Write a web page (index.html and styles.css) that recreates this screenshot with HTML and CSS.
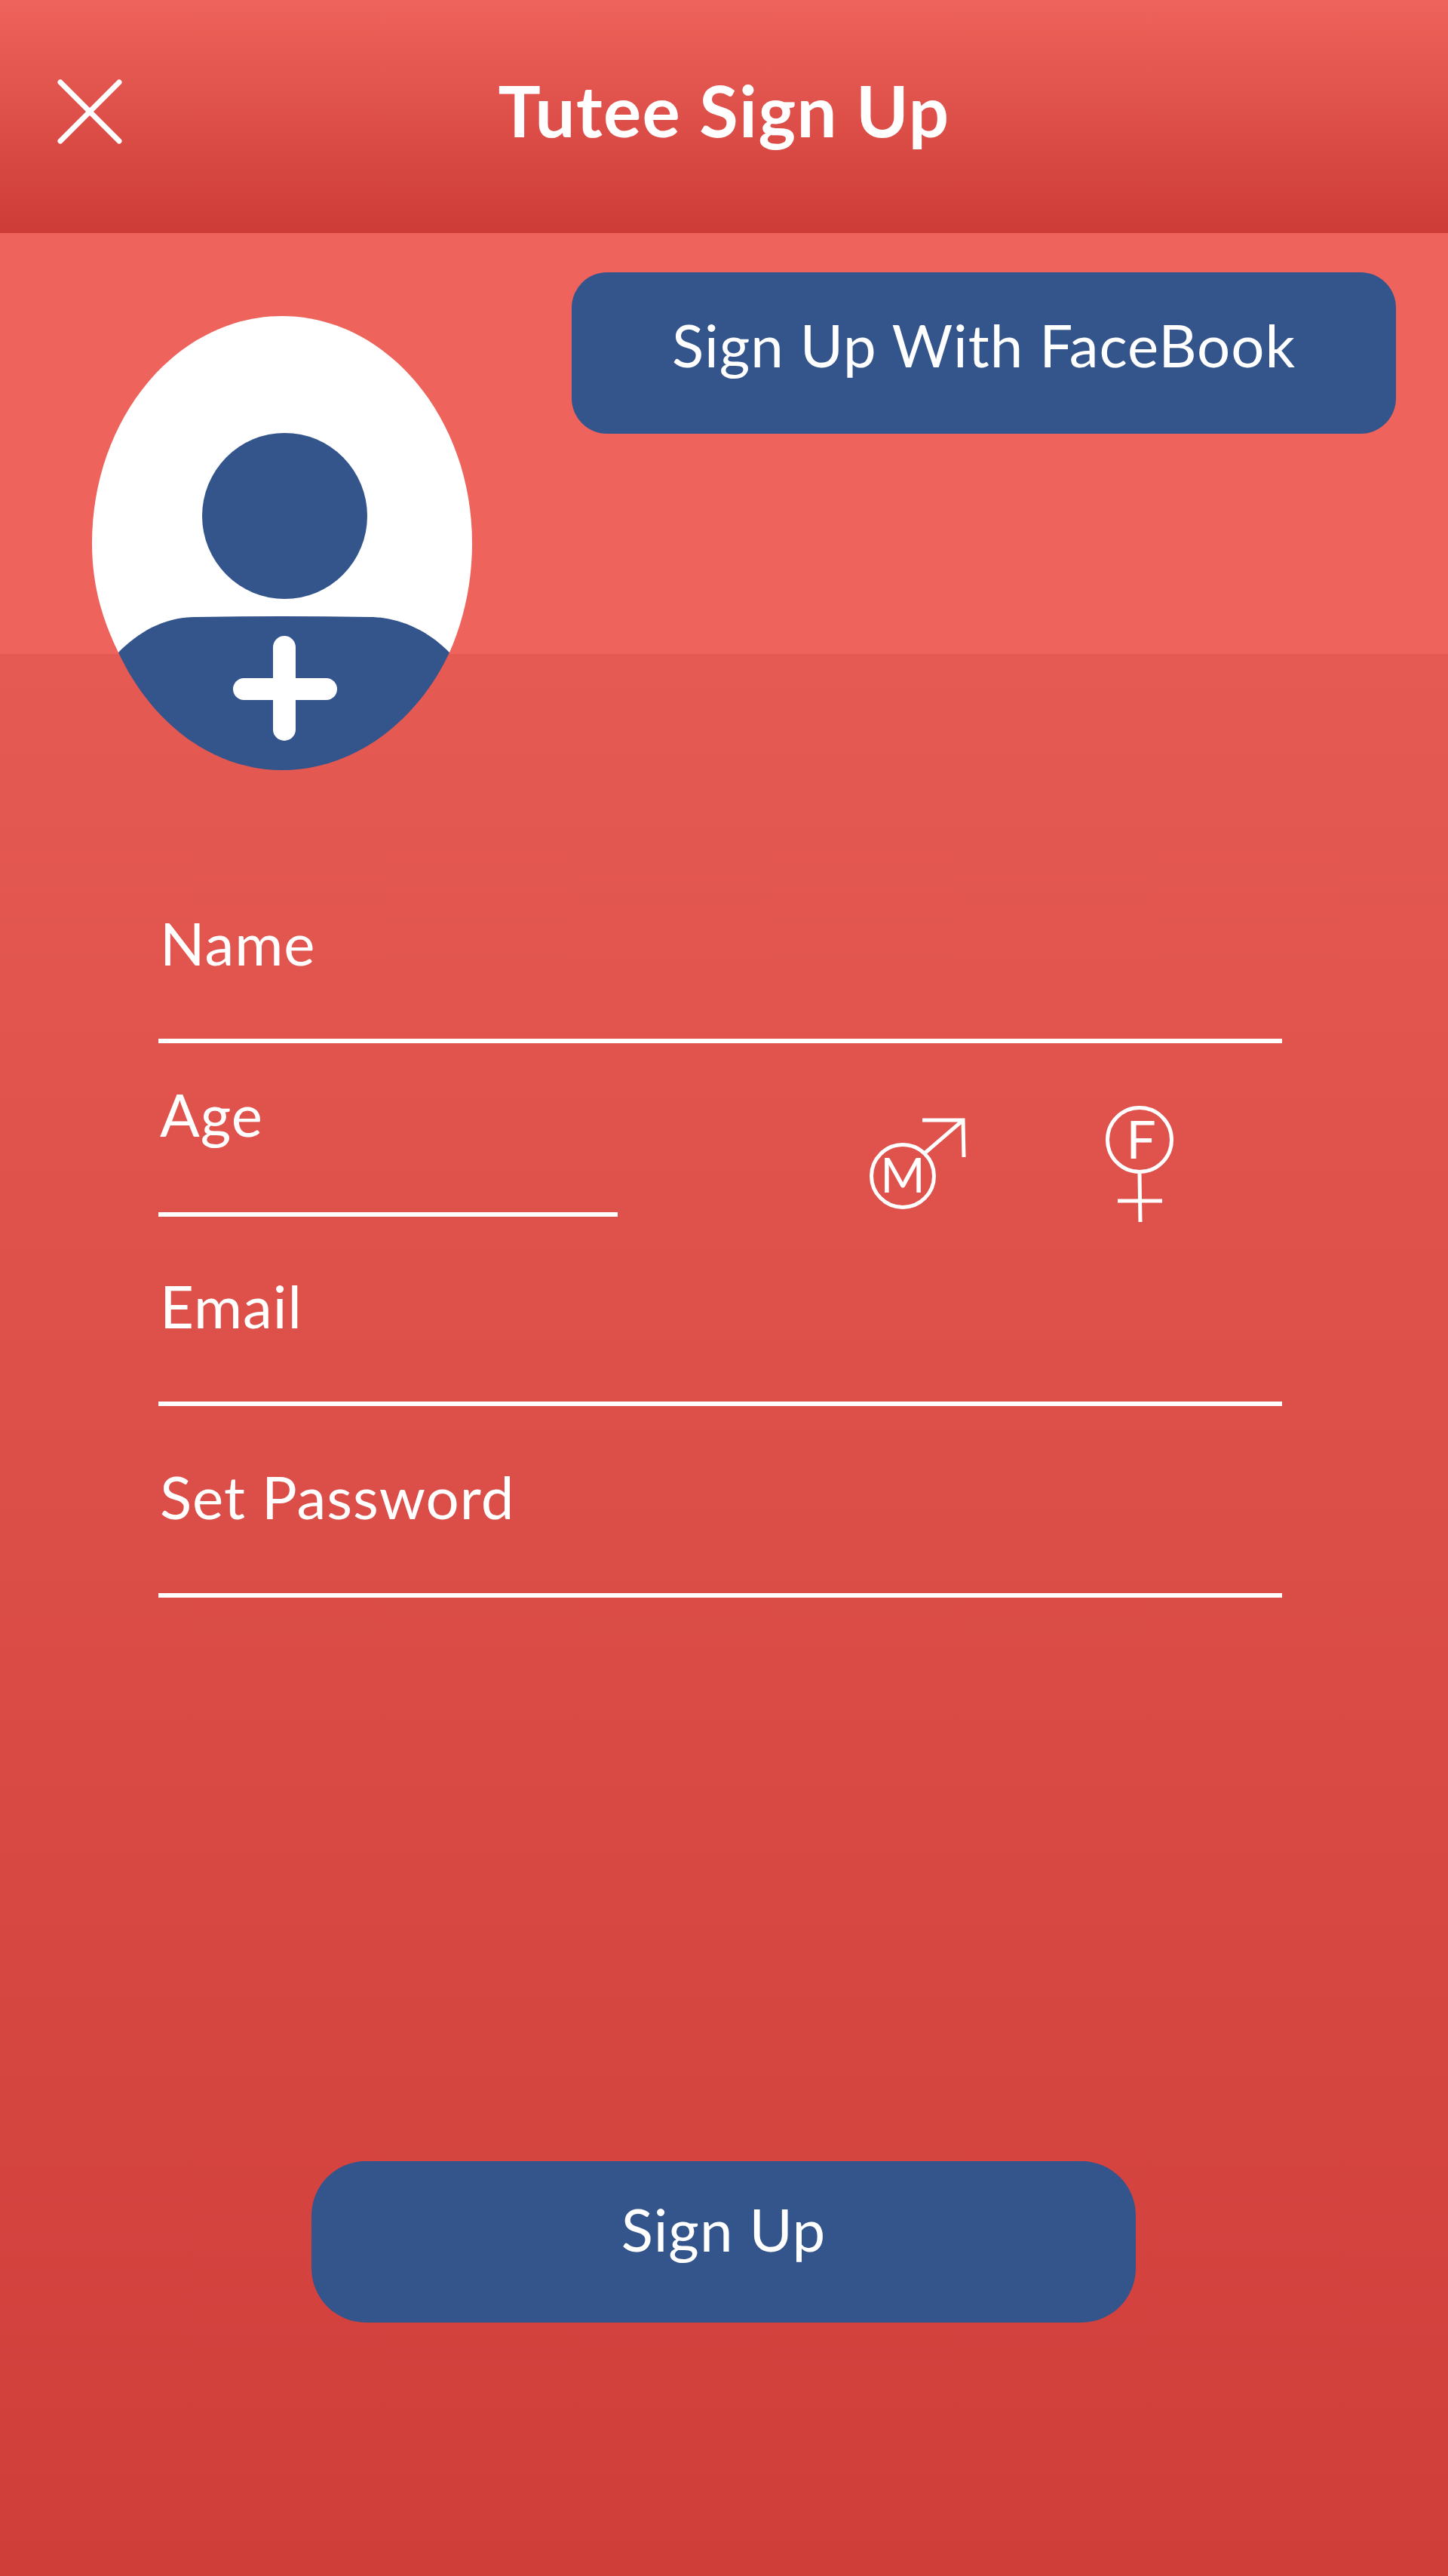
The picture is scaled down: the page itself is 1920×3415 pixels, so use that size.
FILE: index.html
```html
<!DOCTYPE html>
<html lang="en">

<head>
    <meta charset="UTF-8">
    <meta name="viewport" content="width=device-width, initial-scale=1.0">
    <title>Tutee Sign Up</title>
    <link rel="stylesheet" href="styles.css">
</head>

<body>
    <header class="top-bar">
        <button class="close-btn" type="button" aria-label="Close">
            <svg class="close-icon" viewBox="0 0 88 88">
                <path d="M5 5L83 83M83 5L5 83" />
            </svg>
        </button>
        <h1 class="title">Tutee Sign Up</h1>
    </header>

    <main class="content">
        <div class="profile-row">
            <!-- Avatar picker -->
            <svg class="avatar" viewBox="0 0 504 602">
                <path class="avatar-bg" d="M35 446C15 405 0 360 0 301C0 135 113 0 252 0C391 0 504 135 504 301C504 356 492 405 474 446Z" />
                <ellipse class="avatar-blue" cx="255.5" cy="265" rx="109.5" ry="110" />
                <path class="avatar-blue" d="M35 446C62 419 95 399 138 399Q252 397 368 399C410 399 448 419 474 446C430 540 345 602 252 602C160 602 79 540 35 446Z" />
                <rect class="avatar-bg" x="240" y="424" width="30" height="139" rx="15" />
                <rect class="avatar-bg" x="187" y="480" width="138" height="29" rx="14.5" />
            </svg>
            <button class="btn btn-facebook" type="button">Sign Up With FaceBook</button>
        </div>

        <form class="signup-form">
            <div class="field field-name">
                <label>Name</label>
            </div>
            <div class="gender-row">
                <div class="field field-age">
                    <label>Age</label>
                </div>
                <div class="gender-icons">
                    <svg class="gender gender-m" viewBox="0 0 132 126">
                        <circle cx="47" cy="79" r="41.5" />
                        <path d="M77 48L127 5M73 5H127L128 54" />
                        <text x="47" y="101" text-anchor="middle">M</text>
                    </svg>
                    <svg class="gender gender-f" viewBox="0 0 94 156">
                        <circle cx="47" cy="47" r="42.5" />
                        <path d="M47 92L48 156M18 128H77" />
                        <text x="49" y="72" text-anchor="middle">F</text>
                    </svg>
                </div>
            </div>
            <div class="field field-email">
                <label>Email</label>
            </div>
            <div class="field field-password">
                <label>Set Password</label>
            </div>
        </form>

        <button class="btn btn-signup" type="submit">Sign Up</button>
    </main>
</body>

</html>
```

FILE: styles.css
```css
* {
    box-sizing: border-box;
}

body {
    margin: 0;
    color: #fff;
    font-family: "Lato", "Open Sans", sans-serif;
}

/* Header */
.top-bar {
    position: relative;
    height: 309px;
    display: flex;
    align-items: center;
    justify-content: center;
    background: linear-gradient(#ee635b, #ce3c38);
}

.close-btn {
    position: absolute;
    left: 75px;
    top: 104px;
    padding: 0;
    border: none;
    background: none;
    line-height: 0;
}

.close-icon {
    width: 88px;
    height: 88px;
}

.close-icon path {
    fill: none;
    stroke: #fff;
    stroke-width: 7;
    stroke-linecap: round;
}

.title {
    margin: 0 0 18px;
    font-size: 94px;
    font-weight: 700;
    letter-spacing: 1.4px;
    line-height: 1;
}

/* Body */
.content {
    height: 3106px;
    background: linear-gradient(#ee635b 0, #ee635b 558px, #e55a53 558px, #d03e3a 100%);
}

.profile-row {
    display: flex;
    justify-content: space-between;
    align-items: flex-start;
    padding: 52px 69px 0 122px;
}

.avatar {
    width: 504px;
    height: 602px;
    margin-top: 58px;
}

.avatar-bg {
    fill: #fff;
}

.avatar-blue {
    fill: #34558c;
}

.btn {
    display: block;
    width: 1093px;
    height: 214px;
    border: none;
    color: #fff;
    background-color: #34558c;
    font-family: inherit;
    font-size: 78px;
    letter-spacing: 1px;
    line-height: 1;
}

.btn-facebook {
    border-radius: 47px;
    padding-bottom: 23px;
}

.btn-signup {
    margin: 747px 0 0 413px;
    border-radius: 72px;
    padding-bottom: 36px;
}

/* Form */
.signup-form {
    margin: 0 220px 0 210px;
    padding-top: 100px;
}

.field {
    display: flex;
    align-items: flex-end;
    border-bottom: 6px solid #fff;
    font-size: 78px;
    letter-spacing: 1px;
}

.field label {
    padding-left: 2px;
    line-height: 1;
}

.field-name {
    height: 262px;
    padding-bottom: 88px;
}

.gender-row {
    display: flex;
    align-items: flex-start;
    height: 230px;
}

.field-age {
    width: 609px;
    height: 230px;
    padding-bottom: 91px;
}

.gender-icons {
    display: flex;
    align-items: flex-start;
    margin: 81px 0 0 331px;
}

.gender {
    fill: none;
    stroke: #fff;
    stroke-width: 5;
}

.gender text {
    fill: #fff;
    stroke: none;
    font-family: "Lato", sans-serif;
}

.gender-m {
    width: 132px;
    height: 126px;
    margin-top: 16px;
    font-size: 64px;
}

.gender-f {
    width: 94px;
    height: 156px;
    margin-left: 182px;
    font-size: 70px;
}

.field-email {
    height: 251px;
    padding-bottom: 88px;
}

.field-password {
    height: 254px;
    padding-bottom: 89px;
}
```
